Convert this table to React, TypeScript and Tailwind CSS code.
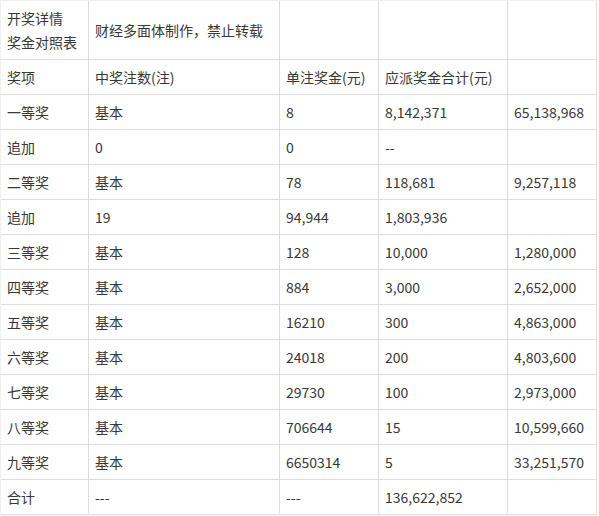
import React from "react";

const rows: string[][] = [
  ["奖项", "中奖注数(注)", "单注奖金(元)", "应派奖金合计(元)", ""],
  ["一等奖", "基本", "8", "8,142,371", "65,138,968"],
  ["追加", "0", "0", "--", ""],
  ["二等奖", "基本", "78", "118,681", "9,257,118"],
  ["追加", "19", "94,944", "1,803,936", ""],
  ["三等奖", "基本", "128", "10,000", "1,280,000"],
  ["四等奖", "基本", "884", "3,000", "2,652,000"],
  ["五等奖", "基本", "16210", "300", "4,863,000"],
  ["六等奖", "基本", "24018", "200", "4,803,600"],
  ["七等奖", "基本", "29730", "100", "2,973,000"],
  ["八等奖", "基本", "706644", "15", "10,599,660"],
  ["九等奖", "基本", "6650314", "5", "33,251,570"],
  ["合计", "---", "---", "136,622,852", ""],
];

const cell =
  "border-r border-b border-[#dedede] px-[6px] py-[5px] leading-[24px] whitespace-nowrap flex items-center";

export default function App() {
  return (
    <div
      className="w-[599px] h-[516px] bg-white text-[14px] text-[#383838]"
      style={{ fontFamily: '"Noto Sans CJK SC", "Noto Sans", sans-serif' }}
    >
      <div className="grid grid-cols-[88px_191px_99px_129px_89px] w-[597px] border-l border-t border-[#f0f0f0]">
        <div className={cell}>
          <div>
            <div>开奖详情</div>
            <div>奖金对照表</div>
          </div>
        </div>
        <div className={cell}>财经多面体制作，禁止转载</div>
        <div className={cell}></div>
        <div className={cell}></div>
        <div className={cell}></div>
        {rows.map((r, i) =>
          r.map((c, j) => (
            <div key={`${i}-${j}`} className={cell}>
              {c}
            </div>
          ))
        )}
      </div>
    </div>
  );
}
